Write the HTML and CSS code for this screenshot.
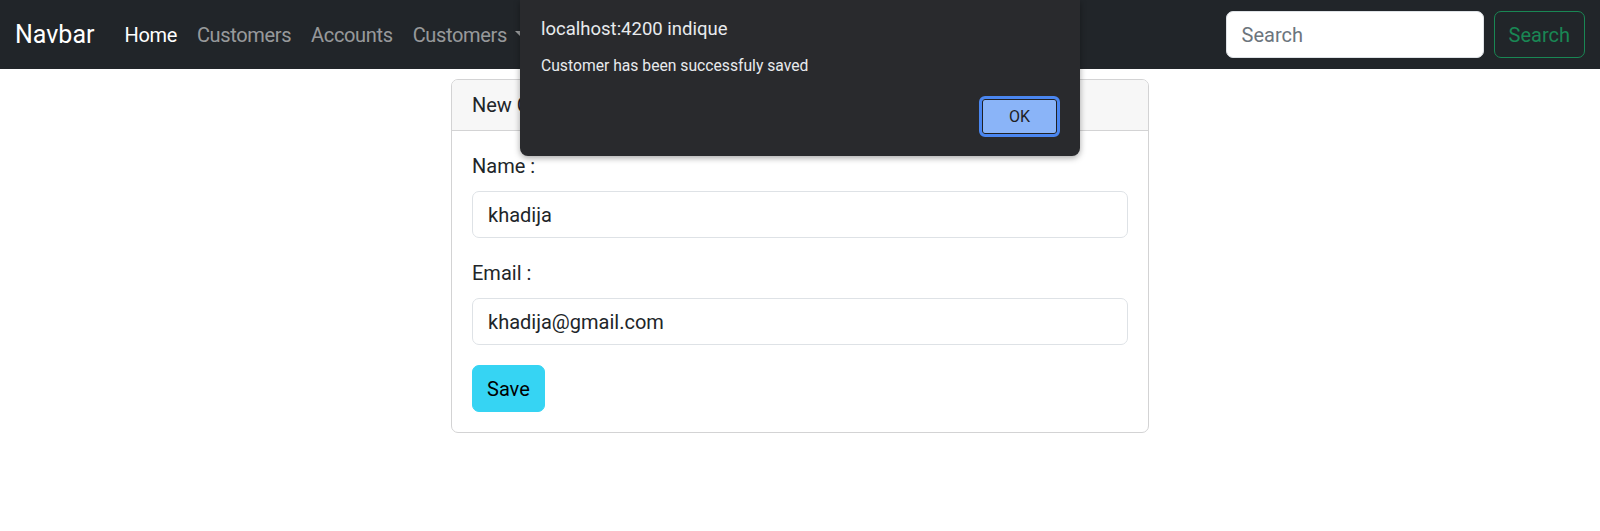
FILE: index.html
```html
<!DOCTYPE html>
<html lang="en">
<head>
<meta charset="utf-8">
<title>Customers</title>
<link rel="stylesheet" href="styles.css">
</head>
<body>
<nav class="navbar">
  <a class="brand" href="#">Navbar</a>
  <ul class="nav-list">
    <li><a class="nav-link active" href="#">Home</a></li>
    <li><a class="nav-link" href="#">Customers</a></li>
    <li><a class="nav-link" href="#">Accounts</a></li>
    <li><a class="nav-link dropdown" href="#">Customers</a></li>
  </ul>
  <form class="search-form">
    <input class="search-input" type="search" placeholder="Search">
    <button class="search-btn" type="button">Search</button>
  </form>
</nav>

<main class="page">
  <section class="card">
    <header class="card-header">New Customer</header>
    <div class="card-body">
      <div class="field">
        <label class="form-label">Name :</label>
        <input class="form-control" type="text" value="khadija">
      </div>
      <div class="field">
        <label class="form-label">Email :</label>
        <input class="form-control" type="text" value="khadija@gmail.com">
      </div>
      <button class="btn-info" type="button">Save</button>
    </div>
  </section>
</main>

<div class="alert-dialog">
  <div class="alert-title">localhost:4200 indique</div>
  <div class="alert-message">Customer has been successfuly saved</div>
  <div class="alert-actions">
    <button class="alert-ok" type="button">OK</button>
  </div>
</div>
</body>
</html>
```

FILE: styles.css
```css
* { box-sizing: border-box; }

html, body { margin: 0; padding: 0; }

body {
  font-family: Roboto, "Noto Sans", "Liberation Sans", sans-serif;
  font-size: 20px;
  line-height: 1.5;
  color: #212529;
  background: #fff;
}

.navbar {
  height: 69px;
  background: #212529;
  display: flex;
  align-items: center;
  padding: 0 15px;
}

.brand {
  font-size: 25px;
  line-height: 37.5px;
  color: #fff;
  text-decoration: none;
  margin-right: 20px;
}

.nav-list {
  list-style: none;
  margin: 0;
  padding: 0;
  display: flex;
}

.nav-link {
  display: block;
  padding: 10px 10px;
  color: rgba(255, 255, 255, 0.55);
  text-decoration: none;
  letter-spacing: -0.35px;
}

.nav-link.active { color: #fff; }

.nav-link.dropdown::after {
  content: "";
  display: inline-block;
  margin-left: 8px;
  vertical-align: 5px;
  border-top: 6px solid;
  border-left: 6px solid transparent;
  border-right: 6px solid transparent;
}

.search-form {
  margin-left: auto;
  display: flex;
  gap: 10px;
}

.search-input {
  width: 258px;
  height: 47px;
  padding: 7px 15px;
  font: inherit;
  color: #212529;
  background: #fff;
  border: 1px solid #dee2e6;
  border-radius: 7px;
}

.search-input::placeholder { color: #6c757d; }

.search-btn {
  height: 47px;
  padding: 7px 14px;
  font: inherit;
  color: #198754;
  background: transparent;
  border: 1px solid #198754;
  border-radius: 7px;
}

.page {
  display: flex;
  justify-content: center;
  padding-top: 10px;
}

.card {
  width: 698px;
  border: 1px solid #d3d3d4;
  border-radius: 7px;
  overflow: hidden;
}

.card-header {
  padding: 10px 20px;
  background: #f7f7f7;
  border-bottom: 1px solid #d3d3d4;
}

.card-body {
  padding: 20px;
}

.field {
  margin-bottom: 20px;
}

.form-label {
  display: block;
  margin-bottom: 10px;
}

.form-control {
  display: block;
  width: 100%;
  height: 47px;
  padding: 7px 15px;
  font: inherit;
  color: #212529;
  background: #fff;
  border: 1px solid #dee2e6;
  border-radius: 7px;
}

.btn-info {
  height: 47px;
  padding: 7px 14px;
  font: inherit;
  color: #000;
  background: #36d4f3;
  border: 1px solid #36d4f3;
  border-radius: 7px;
}

.alert-dialog {
  position: absolute;
  left: 520px;
  top: 0;
  width: 560px;
  height: 156px;
  padding: 17px 20px 0 21px;
  background: #292a2d;
  border-radius: 0 0 8px 8px;
  box-shadow: 0 2px 6px rgba(0, 0, 0, 0.35);
  font-family: Roboto, "Noto Sans", "Liberation Sans", sans-serif;
  color: #e8eaed;
}

.alert-title {
  font-size: 18.5px;
  line-height: 24px;
}

.alert-message {
  margin-top: 15px;
  font-size: 15.7px;
  line-height: 20px;
}

.alert-actions {
  display: flex;
  justify-content: flex-end;
  margin-top: 20px;
}

.alert-ok {
  width: 81px;
  height: 41px;
  font-family: inherit;
  font-size: 16px;
  color: #202124;
  background: #8ab4f8;
  border: 3px solid #4a86f0;
  border-radius: 6px;
  box-shadow: inset 0 0 0 1px #202124;
}
```
